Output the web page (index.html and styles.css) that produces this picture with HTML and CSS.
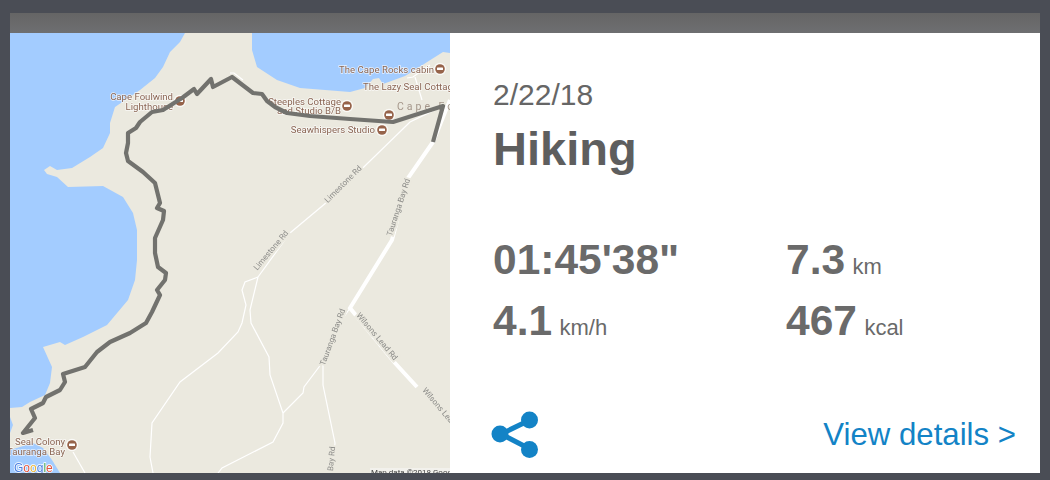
FILE: index.html
```html
<!DOCTYPE html>
<html lang="en">
<head>
  <meta charset="UTF-8" />
  <title>Activity</title>
  <link rel="stylesheet" href="styles.css">
</head>
<body>
  <div class="card">
    <div class="card-top"></div>
    <div class="card-body">
      <div class="map">
        <svg class="map-svg" width="440" height="440" viewBox="10 33 440 440">
          <defs>
            <g id="poi">
              <circle r="6.2" fill="#fff" opacity="0.75"/>
              <circle r="4.8" fill="#96634a"/>
              <rect x="-3" y="-1.6" width="6" height="2.6" rx="0.6" fill="#fff"/>
            </g>
          </defs>
          <rect class="land" x="10" y="33" width="440" height="440"/>

          <!-- water -->
          <path class="water" d="M10 33 L185 33 L180 42 L170 52 L163 67 L155 78 L140 90 L115 107 L110 123 L110 133 L103 148 L90 157 L72 168 L57 170 L50 166 L44 170 L47 174 L57 177 L68 187 L103 186 L123 197 L133 213 L137 230 L137 260 L135 280 L128 300 L107 325 L83 337 L65 345 L60 342 L43 347 L52 367 L50 383 L45 395 L30 402 L22 407 L10 408 Z"/>
          <path class="water" d="M252 33 L252 50 L257 67 L277 80 L300 88 L350 92 L365 88 L373 79 L379 78 L383 84 L405 76 L443 52 L450 53 L450 33 Z"/>
          <path class="water" d="M10 417 L13 425 L10 433 Z"/>
          <path class="water" d="M10 450 L33 443 L43 448 L52 460 L60 473 L10 473 Z"/>

          <!-- small roads -->
          <g class="road-thin">
            <path d="M443 106 L410 122 L333 197 L290 233 L258 277"/>
            <path d="M258 277 L245 282 L242 290 L246 305 L242 323 L238 332 L218 353 L180 382 L152 423 L150 457 L153 473"/>
            <path d="M258 277 L250 310 L251 323 L269 357 L270 375 L283 413 L283 423 L273 442 L222 468 L218 473"/>
            <path d="M350 308 L333 333 L322 363 L304 387 L303 393 L283 413"/>
            <path d="M323 363 L323 385 L335 443 L333 467"/>
            <path d="M73 452 L85 473"/>
            <path d="M407 78 L413 77 L430 65"/>
            <path d="M415 77 L422 100"/>
            <path d="M230 73 L234 73 L243 80"/>
          </g>

          <!-- main roads -->
          <g class="road">
            <path d="M450 100 L433 142 L408 178 L392 240 L350 308 L395 363 L417 387"/>
          </g>

          <!-- road names -->
          <g class="road-name">
            <text transform="translate(345 186) rotate(-45)">Limestone Rd</text>
            <text transform="translate(273 252) rotate(-50)">Limestone Rd</text>
            <text transform="translate(401 208) rotate(-72)">Tauranga Bay Rd</text>
            <text transform="translate(335 338) rotate(-70)">Tauranga Bay Rd</text>
            <text transform="translate(375 338) rotate(50)">Wilsons Lead Rd</text>
            <text transform="translate(441 413) rotate(50)">Wilsons Lead Rd</text>
            <text transform="translate(334 459) rotate(-85)">Bay Rd</text>
          </g>

          <!-- places -->
          <g class="place">
            <text x="173" y="100" text-anchor="end">Cape Foulwind</text>
            <text x="173" y="110" text-anchor="end">Lighthouse</text>
            <text x="341" y="105" text-anchor="end">Steeples Cottage</text>
            <text x="341" y="114" text-anchor="end">and Studio B/B</text>
            <text x="375" y="133" text-anchor="end">Seawhispers Studio</text>
            <text x="339" y="73" textLength="95">The Cape Rocks cabin</text>
            <text x="363" y="90">The Lazy Seal Cottage</text>
            <text x="15" y="445">Seal Colony</text>
            <text x="65" y="455" text-anchor="end">Tauranga Bay</text>
          </g>
          <text class="town" x="397" y="110">Cape Foulwind</text>
          <use href="#poi" x="180" y="101"/>
          <use href="#poi" x="347" y="106"/>
          <use href="#poi" x="389" y="115"/>
          <use href="#poi" x="382" y="130"/>
          <use href="#poi" x="440" y="69"/>
          <use href="#poi" x="72" y="445"/>

          <!-- track -->
          <path class="track" d="M433 142 L443 106 L393 122 L350 119 L310 116 L287 113 L275 107 L267 101 L262 94 L253 93 L232 77 L213 87 L211 79 L197 94 L194 89 L182 98 L163 110 L152 112 L140 122 L136 128 L128 133 L128 143 L126 153 L128 161 L143 172 L155 183 L160 203 L157 208 L164 211 L163 220 L155 238 L155 253 L158 267 L166 273 L165 280 L157 290 L160 295 L152 312 L146 323 L130 333 L110 342 L97 352 L85 367 L63 374 L65 382 L60 390 L46 397 L43 403 L31 409 L35 418 L23 433 L33 430"/>

          <text class="logo" x="14" y="472"><tspan fill="#4a7fe0">G</tspan><tspan fill="#e0533f">o</tspan><tspan fill="#e8b53a">o</tspan><tspan fill="#4a7fe0">g</tspan><tspan fill="#3fa556">l</tspan><tspan fill="#e0533f">e</tspan></text>
          <rect class="credit-bg" x="370" y="468" width="80" height="5"/>
          <text class="credit" x="371" y="475">Map data ©2018 Google</text>
        </svg>
      </div>

      <div class="info">
        <div class="date">2/22/18</div>
        <h1 class="title">Hiking</h1>
        <div class="stats">
          <div class="stat"><span class="num">01:45'38"</span></div>
          <div class="stat"><span class="num">7.3</span> <span class="unit">km</span></div>
          <div class="stat"><span class="num">4.1</span> <span class="unit">km/h</span></div>
          <div class="stat"><span class="num">467</span> <span class="unit">kcal</span></div>
        </div>
        <div class="actions">
          <svg class="share" width="50" height="48" viewBox="0 0 50 48">
            <path d="M40 9 L11 23 L40 38" fill="none" stroke="#1383c6" stroke-width="5"/>
            <circle cx="39.500" cy="9" r="8.500" fill="#1383c6"/>
            <circle cx="10" cy="23" r="8.500" fill="#1383c6"/>
            <circle cx="39.500" cy="38.500" r="8.500" fill="#1383c6"/>
          </svg>
          <a class="details" href="#">View details &gt;</a>
        </div>
      </div>
    </div>
  </div>
</body>
</html>
```

FILE: styles.css
```css
html, body {
  height: 100%;
}

body {
  margin: 0;
  padding: 13px 10px 7px;
  box-sizing: border-box;
  background-color: #4a4d55;
  font-family: 'Liberation Sans', Arial, sans-serif;
  overflow: hidden;
}

.card {
  display: flex;
  flex-direction: column;
  height: 460px;
  background-color: #fff;
}

.card-top {
  height: 20px;
  background: linear-gradient(#656565, #6e6f71);
}

.card-body {
  display: flex;
  flex: 1;
}

.map {
  width: 440px;
  height: 440px;
  overflow: hidden;
  background-color: #ebe9df;
}

.map-svg {
  display: block;
  filter: blur(0.45px);
}

.land {
  fill: #ebe9df;
}

.water {
  fill: #a3ccff;
}

.road-thin path {
  fill: none;
  stroke: #fff;
  stroke-width: 1.2;
}

.road path {
  fill: none;
  stroke: #fff;
  stroke-width: 4;
}

.road-name text {
  font-family: 'Roboto', sans-serif;
  font-size: 8px;
  fill: #8b8b88;
  text-anchor: middle;
  stroke: #ebe9df;
  stroke-width: 4px;
  paint-order: stroke;
}

.place text {
  font-family: 'Roboto', sans-serif;
  font-size: 9.6px;
  fill: #8a6553;
  stroke: #fff;
  stroke-width: 1.5px;
  stroke-opacity: 0.7;
  paint-order: stroke;
}

.town {
  font-family: 'Roboto', sans-serif;
  font-size: 10.5px;
  letter-spacing: 3px;
  fill: #a4968a;
}

.track {
  fill: none;
  stroke: #72726e;
  stroke-width: 4.2;
  stroke-linejoin: round;
}

.logo {
  font-family: 'Liberation Sans', sans-serif;
  font-size: 12px;
  stroke: #fff;
  stroke-width: 1.5px;
  paint-order: stroke;
}

.credit-bg {
  fill: #f2f1ec;
}

.credit {
  font-family: 'Roboto', sans-serif;
  font-size: 8px;
  fill: #444;
}

.info {
  flex: 1;
  display: flex;
  flex-direction: column;
  padding: 46px 24px 0 43px;
  color: #666;
}

.date {
  font-size: 30px;
  line-height: 32px;
}

.title {
  margin: 11px 0 0;
  font-size: 47px;
  line-height: 54px;
  font-weight: bold;
  color: #5e5e5e;
}

.stats {
  display: grid;
  grid-template-columns: 293px 1fr;
  grid-auto-rows: 51px;
  row-gap: 10px;
  margin-top: 58px;
}

.stat {
  white-space: nowrap;
  line-height: 51px;
}

.num {
  font-size: 42.500px;
  font-weight: bold;
  color: #6a6a6a;
}

.unit {
  margin-left: 3px;
  font-size: 22px;
  color: #6a6a6a;
}

.actions {
  display: flex;
  align-items: center;
  justify-content: space-between;
  margin-top: 65px;
  margin-left: -3px;
}

.share {
  display: block;
}

.details {
  font-size: 31.200px;
  color: #1383c6;
  text-decoration: none;
}
```
